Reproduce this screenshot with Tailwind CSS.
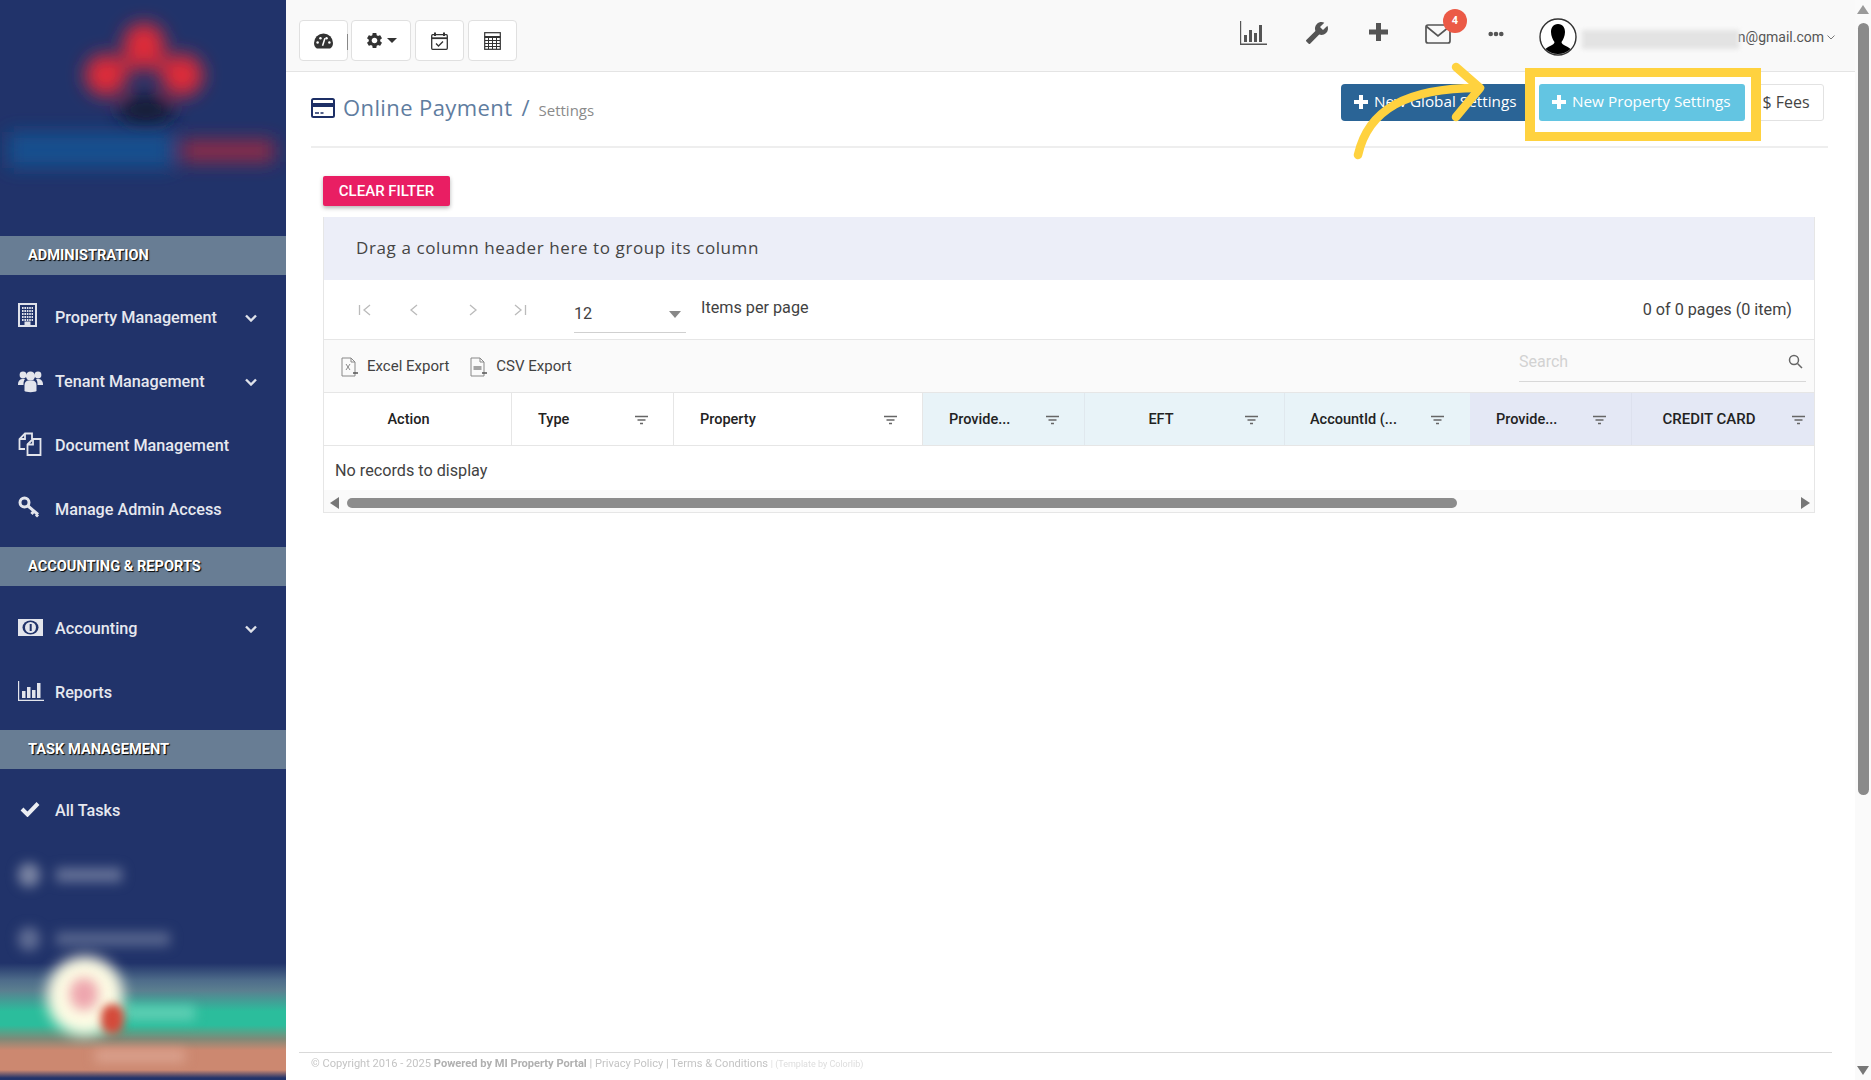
<!DOCTYPE html>
<html lang="en">
<head>
  <meta charset="UTF-8">
  <title>Online Payment - Settings</title>
  <script src="https://cdn.jsdelivr.net/npm/@tailwindcss/browser@4"></script>
</head>
<body class="bg-white text-[#333] font-['Roboto',sans-serif] overflow-hidden">
<div class="flex h-[1080px] w-[1871px] overflow-hidden">

  <!-- sidebar -->
  <aside class="relative w-[286px] shrink-0 h-full bg-[#21336a] text-[#e6e8ef] overflow-hidden">
    <svg class="block" width="286" height="236" viewBox="0 0 286 236">
      <defs><filter id="b1" x="-30%" y="-100%" width="160%" height="300%"><feGaussianBlur stdDeviation="9"/></filter></defs>
      <g filter="url(#b1)">
        <circle cx="144" cy="44" r="21" fill="#e02a38"/>
        <circle cx="106" cy="75" r="21" fill="#e02a38"/>
        <circle cx="182" cy="75" r="21" fill="#e02a38"/>
        <path d="M125 55 L165 55 L182 70 L108 70Z" fill="#c92c3c"/>
        <ellipse cx="146" cy="110" rx="28" ry="16" fill="#141d38"/>
      </g>
      <g filter="url(#b1)">
        <rect x="8" y="132" width="164" height="36" fill="#174f8e"/>
        <rect x="182" y="140" width="92" height="22" fill="#8f2b47"/>
      </g>
    </svg>

    <div class="h-[39px] bg-[#687d94] flex items-center pl-[28px] text-[14.600px] font-bold text-white [text-shadow:1px_1px_1px_#000]">ADMINISTRATION</div>
    <nav class="pt-[11px] pb-[5px] text-[16.200px] font-medium">
      <a class="h-[64px] flex items-center">
        <svg class="ml-[18px] w-[19px] h-[24px] -mt-[6px]" viewBox="0 0 19 24" fill="none" stroke="#dfe2ea"><rect x="1" y="1" width="17" height="22" stroke-width="2"/><path d="M4 5h11M4 8h11M4 11h11M4 14h11M4 17h11" stroke-width="2" stroke-dasharray="1.600 .8"/><rect x="7" y="19" width="5" height="4" fill="#dfe2ea"/></svg>
        <span class="ml-[18px] flex-1">Property Management</span>
        <svg class="w-[12px] h-[8px] mr-[29px]" viewBox="0 0 12 8" fill="none" stroke="#dfe2ea" stroke-width="2.400"><path d="M1 1.500l5 5 5-5"/></svg>
      </a>
      <a class="h-[64px] flex items-center">
        <svg class="ml-[18px] w-[25px] h-[24px] -mt-[2px]" viewBox="0 0 25 24" fill="#e3e5ec"><circle cx="5" cy="6" r="3.400"/><circle cx="20" cy="6" r="3.400"/><circle cx="12.500" cy="7" r="4.600"/><path d="M0 15c0-3 2-5 4.500-5H7c-1 1-1.500 3-1.500 5v1H0zM25 15c0-3-2-5-4.500-5H18c1 1 1.500 3 1.500 5v1H25z"/><path d="M6.500 22v-6c0-3 2-4.500 4-4.500h4c2 0 4 1.500 4 4.500v6c-1 1.500-11 1.500-12 0z"/></svg>
        <span class="ml-[12px] flex-1">Tenant Management</span>
        <svg class="w-[12px] h-[8px] mr-[29px]" viewBox="0 0 12 8" fill="none" stroke="#dfe2ea" stroke-width="2.400"><path d="M1 1.500l5 5 5-5"/></svg>
      </a>
      <a class="h-[64px] flex items-center">
        <svg class="ml-[18px] w-[24px] h-[24px] -mt-[4px]" viewBox="0 0 24 24" fill="none" stroke="#e3e5ec" stroke-width="1.800"><path d="M7 17H1.500V7L7 1.500h7V7"/><path d="M9.500 12.500L15 7h7.500v16H9.500z"/><path d="M7 1.500V7H1.500M15 7v5.500H9.500"/></svg>
        <span class="ml-[13px]">Document Management</span>
      </a>
      <a class="h-[64px] flex items-center">
        <svg class="ml-[18px] w-[22px] h-[22px] -mt-[6px]" viewBox="0 0 22 22" fill="none" stroke="#e3e5ec" stroke-width="3"><circle cx="6.500" cy="6.500" r="4.500"/><path d="M10 10l10 8.500M16 15l-2.500 3M20 18.500l-2 2"/></svg>
        <span class="ml-[15px]">Manage Admin Access</span>
      </a>
    </nav>

    <div class="h-[39px] bg-[#687d94] flex items-center pl-[28px] text-[14.600px] font-bold text-white [text-shadow:1px_1px_1px_#000]">ACCOUNTING &amp; REPORTS</div>
    <nav class="pt-[11px] pb-[5px] text-[16.200px] font-medium">
      <a class="h-[64px] flex items-center">
        <svg class="ml-[18px] w-[25px] h-[17px] -mt-[4px]" viewBox="0 0 25 17"><rect width="25" height="17" fill="#e3e5ec"/><ellipse cx="12.500" cy="8.500" rx="8" ry="7" fill="#21336a"/><ellipse cx="12.500" cy="8.500" rx="5.500" ry="5.500" fill="#e3e5ec"/><rect x="11.700" y="5" width="2" height="7" fill="#21336a"/></svg>
        <span class="ml-[12px] flex-1">Accounting</span>
        <svg class="w-[12px] h-[8px] mr-[29px]" viewBox="0 0 12 8" fill="none" stroke="#dfe2ea" stroke-width="2.400"><path d="M1 1.500l5 5 5-5"/></svg>
      </a>
      <a class="h-[64px] flex items-center">
        <svg class="ml-[18px] w-[26px] h-[20px] -mt-[5px]" viewBox="0 0 26 20" fill="#e3e5ec"><path d="M0 0h1.200v18.800H26V20H0z"/><rect x="4" y="10" width="3.500" height="7"/><rect x="9" y="6" width="3.500" height="11"/><rect x="14" y="9" width="3.500" height="8"/><rect x="19" y="2" width="3.500" height="15"/></svg>
        <span class="ml-[11px]">Reports</span>
      </a>
    </nav>

    <div class="h-[39px] bg-[#687d94] flex items-center pl-[28px] text-[14.600px] font-bold text-white [text-shadow:1px_1px_1px_#000]">TASK MANAGEMENT</div>
    <nav class="pt-[10px] text-[16.200px] font-medium">
      <a class="h-[64px] flex items-center">
        <svg class="ml-[20px] w-[20px] h-[16px] -mt-[4px]" viewBox="0 0 20 16" fill="none" stroke="#eceef3" stroke-width="4"><path d="M2 8l5.500 5.500L18 2.500"/></svg>
        <span class="ml-[15px]">All Tasks</span>
      </a>
      <!-- blurred items -->
      <a class="h-[64px] flex items-center blur-[6px]">
        <span class="ml-[18px] w-[22px] h-[24px] rounded-full bg-[#7b85a3]"></span>
        <span class="ml-[16px] w-[66px] h-[14px] bg-[#667298]"></span>
      </a>
      <a class="h-[64px] flex items-center blur-[6px]">
        <span class="ml-[18px] w-[22px] h-[24px] rounded-full bg-[#5f6c93]"></span>
        <span class="ml-[16px] w-[114px] h-[14px] bg-[#57658d]"></span>
      </a>
    </nav>

    <!-- blurred bottom of the sidebar -->
    <div class="absolute left-0 right-0 top-[963px] h-[115px] bg-[linear-gradient(to_bottom,transparent_0%,#4e6c8a_15%,#5b7f90_24%,#2bbd9c_42%,#2bbd9c_54%,#7f8a78_66%,#cc8870_76%,#cc8870_93%,#21336a_100%)]"></div>
    <div class="absolute left-[125px] top-[1006px] w-[70px] h-[14px] bg-[#62cfb5] blur-[6px]"></div>
    <div class="absolute left-[95px] top-[1050px] w-[90px] h-[12px] bg-[#dba390] blur-[6px]"></div>
    <div class="absolute left-[47px] top-[956px] w-[76px] h-[80px] rounded-full bg-[#fdfbe4] blur-[7px]"></div>
    <div class="absolute left-[70px] top-[978px] w-[28px] h-[32px] rounded-full bg-[#eea6ae] blur-[6px]"></div>
    <div class="absolute left-[101px] top-[1004px] w-[23px] h-[30px] rounded-full bg-[#d44a3a] blur-[4px]"></div>
    <div class="absolute left-0 right-0 bottom-0 h-[2px] bg-[#21336a]"></div>
  </aside>

  <!-- page -->
  <div class="relative flex-1 flex flex-col h-full min-w-0">
    <header class="h-[72px] shrink-0 bg-[#f9f9f9] border-b border-[#e4e4e4] flex items-start">
      <div class="flex items-start pl-[13px] pt-[20px]">
        <button class="w-[49px] h-[41px] bg-white border border-[#e0e0e0] rounded flex items-center justify-center">
          <svg class="w-[19px] h-[16px]" viewBox="0 0 20 16"><path d="M3 16C1 14.500 0 12.500 0 10a10 10 0 0 1 20 0c0 2.500-1 4.500-3 6z" fill="#333"/><g fill="#fff"><circle cx="3.800" cy="9.500" r="1.300"/><circle cx="6.800" cy="5" r="1.300"/><circle cx="13.200" cy="5" r="1.300"/><circle cx="16.200" cy="9.500" r="1.300"/></g><path d="M9 13l2.500-8" stroke="#fff" stroke-width="1.600"/></svg>
        </button>
        <span class="w-[1px] h-[16px] bg-[#888] -ml-[1px] mt-[14px] mr-[3px]"></span>
        <button class="w-[60px] h-[41px] bg-white border border-[#e0e0e0] rounded flex items-center justify-center gap-[3px]">
          <svg class="w-[19px] h-[19px]" viewBox="0 0 24 24" fill="#333"><path d="M19.140 12.940c.04-.3.06-.61.06-.94 0-.32-.02-.64-.07-.94l2.030-1.580c.18-.14.23-.41.12-.61l-1.920-3.320c-.12-.22-.37-.29-.59-.22l-2.390.96c-.5-.38-1.030-.7-1.620-.94l-.36-2.540c-.04-.24-.24-.41-.48-.41h-3.840c-.24 0-.43.17-.47.41l-.36 2.540c-.59.24-1.130.57-1.620.94l-2.390-.96c-.22-.08-.47 0-.59.22L2.740 8.870c-.12.21-.08.47.12.61l2.030 1.580c-.05.3-.09.63-.09.94s.02.64.07.94l-2.030 1.580c-.18.14-.23.41-.12.61l1.920 3.320c.12.22.37.29.59.22l2.390-.96c.5.38 1.030.7 1.620.94l.36 2.540c.05.24.24.41.48.41h3.840c.24 0 .44-.17.47-.41l.36-2.540c.59-.24 1.130-.56 1.620-.94l2.390.96c.22.08.47 0 .59-.22l1.920-3.320c.12-.22.07-.47-.12-.61l-2.010-1.580zM12 15.600c-1.980 0-3.600-1.620-3.600-3.600s1.620-3.600 3.600-3.600 3.600 1.620 3.600 3.600-1.620 3.600-3.600 3.600z"/></svg>
          <svg class="w-[10px] h-[5px]" viewBox="0 0 10 5" fill="#333"><path d="M0 0h10L5 5z"/></svg>
        </button>
        <button class="ml-[4px] w-[49px] h-[41px] bg-white border border-[#e0e0e0] rounded flex items-center justify-center">
          <svg class="w-[17px] h-[18px]" viewBox="0 0 17 18" fill="none" stroke="#333" stroke-width="1.300"><rect x=".7" y="2.700" width="15.600" height="14.600" rx="1"/><path d="M.7 6.200h15.600" stroke-width="1.800"/><path d="M4 .5v3.500M13 .5v3.500" stroke-width="2"/><path d="M5 11.500l2.500 2.500 4.500-4.500"/></svg>
        </button>
        <button class="ml-[4px] w-[49px] h-[41px] bg-white border border-[#e0e0e0] rounded flex items-center justify-center">
          <svg class="w-[17px] h-[18px]" viewBox="0 0 17 18" fill="none" stroke="#333"><rect x=".7" y=".7" width="15.600" height="16.600" stroke-width="1.200"/><path d="M.7 5h15.600" stroke-width="2"/><path d="M1 8.500h15M1 11.500h15M1 14.500h15M4.500 6v11M8.500 6v11M12.500 6v11" stroke-width="1"/></svg>
        </button>
      </div>

      <div class="ml-auto flex items-start pr-[20px]">
        <svg class="mt-[21px] w-[27px] h-[24px]" viewBox="0 0 27 24" fill="#555"><path d="M0 0h1.200v22.500H27V24H0z"/><rect x="4" y="14" width="3" height="7"/><rect x="9" y="9" width="3" height="12"/><rect x="14" y="12" width="3" height="9"/><rect x="19" y="4" width="3" height="17"/></svg>
        <svg class="ml-[38px] mt-[21px] w-[24px] h-[24px] -scale-x-100" viewBox="0 0 24 24" fill="#555"><path d="M22.700 19l-9.100-9.100c.9-2.300.4-5-1.500-6.900-2-2-5-2.400-7.400-1.300L9 6 6 9 1.600 4.700C.4 7.100.9 10.100 2.900 12.100c1.900 1.900 4.600 2.400 6.900 1.500l9.100 9.100c.4.4 1 .4 1.400 0l2.300-2.300c.5-.4.5-1.100.1-1.400z"/></svg>
        <svg class="ml-[40px] mt-[23px] w-[19px] h-[18px]" viewBox="0 0 19 18" fill="#555"><path d="M7 0h5v6.500h7v5h-7V18H7v-6.500H0v-5h7z"/></svg>
        <div class="relative ml-[37px] mt-[24px] w-[26px] h-[20px]">
          <svg class="w-[26px] h-[20px]" viewBox="0 0 26 20" fill="none" stroke="#555" stroke-width="1.700"><rect x="1" y="1" width="24" height="18" rx="2"/><path d="M1.500 2.500L13 12 24.500 2.500"/></svg>
          <span class="absolute left-[18px] -top-[15px] w-[24px] h-[24px] rounded-full bg-[#eb5a46] text-white text-[11px] font-bold flex items-center justify-center">4</span>
        </div>
        <svg class="ml-[37px] mt-[31px] w-[16px] h-[6px]" viewBox="0 0 16 6" fill="#555"><circle cx="2.700" cy="3" r="2.300"/><circle cx="8" cy="3" r="2.300"/><circle cx="13.300" cy="3" r="2.300"/></svg>
        <svg class="ml-[35px] mt-[18px] w-[38px] h-[38px]" viewBox="0 0 38 38"><circle cx="19" cy="19" r="18" fill="#fff" stroke="#333" stroke-width="1.400"/><path d="M19 6c5 0 7 4 7 8s-2 8-3.500 10c0 3 6 4 9 7a18 18 0 0 1-25 0c3-3 9-4 9-7-1.500-2-3.500-6-3.500-10s2-8 7-8z" fill="#000"/></svg>
        <span class="ml-[5px] mt-[30px] w-[157px] h-[19px] bg-[#e3e3e3] blur-[2px]"></span>
        <span class="-ml-[1px] mt-[27px] text-[14px] leading-[20px] text-[#555]">n@gmail.com</span>
        <svg class="ml-[3px] mt-[35px] w-[8px] h-[5px]" viewBox="0 0 8 5" fill="none" stroke="#777"><path d="M.5.5L4 4 7.500.5"/></svg>
      </div>
    </header>

    <main class="flex-1 flex flex-col min-h-0 pl-[25px] pr-[27px]">
      <!-- page heading -->
      <div class="h-[76px] shrink-0 border-b-2 border-[#eeeeee] flex items-start">
        <svg class="mt-[26px] w-[24px] h-[20px]" viewBox="0 0 24 20"><rect x="1" y="1" width="22" height="18" rx="1.500" fill="#fff" stroke="#1d2f66" stroke-width="2"/><rect x="1" y="5" width="22" height="4" fill="#1d2f66"/><path d="M4 15h4M9.500 15h3" stroke="#1d2f66" stroke-width="1.500"/></svg>
        <h1 class="ml-[8px] mt-[20px] text-[22px] leading-[30px] text-[#5f7d9f] font-['Open_Sans',sans-serif] tracking-[0.4px]">Online Payment</h1>
        <span class="ml-[9px] mt-[20px] text-[22px] leading-[30px] text-[#5f7d9f] font-['Open_Sans',sans-serif]">/</span>
        <span class="ml-[9px] mt-[28px] text-[15px] leading-[20px] text-[#8a8a8a] font-['Open_Sans',sans-serif]">Settings</span>
        <div class="ml-auto mr-[4px] mt-[12px] flex font-['Open_Sans',sans-serif] text-[15.300px] h-[37px]">
          <button class="w-[194px] bg-[#2a6496] text-white rounded-l flex items-center pl-[13px] pb-[2px] whitespace-nowrap">
            <svg class="w-[14px] h-[14px] mr-[6px]" viewBox="0 0 14 14" fill="#fff"><path d="M5 0h4v5h5v4H9v5H5V9H0V5h5z"/></svg>New Global Settings</button>
          <button class="ml-[4px] w-[206px] bg-[#63c5e2] text-white rounded-[3px] flex items-center pl-[13px] pb-[2px]">
            <svg class="w-[14px] h-[14px] mr-[6px]" viewBox="0 0 14 14" fill="#fff"><path d="M5 0h4v5h5v4H9v5H5V9H0V5h5z"/></svg>New Property Settings</button>
          <button class="ml-[6px] w-[73px] bg-white border border-[#e2e2e2] rounded-[3px] text-[#444] text-[16px] flex items-center justify-center pb-[2px] pr-[3px]">$ Fees</button>
        </div>
      </div>

      <button class="mt-[28px] ml-[12px] w-[127px] h-[30px] shrink-0 bg-[#e91e63] text-white text-[15px] font-medium rounded-[2px] shadow-[0_2px_4px_rgba(0,0,0,.3)]">CLEAR FILTER</button>

      <!-- grid -->
      <section class="mt-[11px] ml-[12px] w-[1492px] h-[296px] shrink-0 border border-[#e6e6e6] border-t-0 flex flex-col">
        <div class="h-[63px] bg-[#eceef8] flex items-center pl-[32px] pb-[2px] font-['Open_Sans',sans-serif] text-[17px] tracking-[0.6px] text-[#444]">Drag a column header here to group its column</div>

        <div class="h-[60px] border-b border-[#e6e6e6] flex text-[16.200px] text-[#424242]">
          <div class="flex items-center h-[60px] pl-[34px]">
            <svg class="w-[14px] h-[14px]" viewBox="0 0 14 14" fill="none" stroke="#bbb" stroke-width="1.300"><path d="M1.500 2v10M12 2L6 7l6 5"/></svg>
            <svg class="ml-[35px] w-[14px] h-[14px]" viewBox="0 0 14 14" fill="none" stroke="#bbb" stroke-width="1.300"><path d="M10 2L4 7l6 5"/></svg>
            <svg class="ml-[45px] w-[14px] h-[14px]" viewBox="0 0 14 14" fill="none" stroke="#bbb" stroke-width="1.300"><path d="M4 2l6 5-6 5"/></svg>
            <svg class="ml-[33px] w-[14px] h-[14px]" viewBox="0 0 14 14" fill="none" stroke="#bbb" stroke-width="1.300"><path d="M2 2l6 5-6 5M12.500 2v10"/></svg>
          </div>
          <div class="ml-[47px] mt-[2px] w-[112px] h-[51px] border-b border-[#d0d0d0] flex items-center justify-between pr-[5px] pt-[14px]">
            <span>12</span>
            <svg class="w-[12px] h-[7px]" viewBox="0 0 12 7" fill="#888"><path d="M0 0h12L6 7z"/></svg>
          </div>
          <span class="ml-[15px] mt-[16px] leading-[24px]">Items per page</span>
          <span class="ml-auto mr-[22px] mt-[18px] leading-[24px]">0 of 0 pages (0 item)</span>
        </div>

        <div class="h-[53px] bg-[#fafafa] border-b border-[#e6e6e6] flex items-start text-[15px] text-[#424242]">
          <svg class="ml-[17px] mt-[17px] w-[18px] h-[20px]" viewBox="0 0 18 20" fill="none" stroke="#888"><path d="M1 1h9l4 4v14H1z"/><path d="M10 1v4h4"/><path d="M5 7l4 6M9 7l-4 6" stroke-width="1"/><path d="M12 16h5" stroke="#555" stroke-width="1.500"/></svg>
          <span class="ml-[8px] mt-[14px] leading-[24px]">Excel Export</span>
          <svg class="ml-[21px] mt-[17px] w-[18px] h-[20px]" viewBox="0 0 18 20" fill="none" stroke="#888"><path d="M1 1h9l4 4v14H1z"/><path d="M10 1v4h4"/><path d="M3.500 10h8M3.500 12h8" stroke-width="1.500"/><path d="M12 16h5" stroke="#555" stroke-width="1.500"/></svg>
          <span class="ml-[8px] mt-[14px] leading-[24px]">CSV Export</span>
          <div class="ml-auto mr-[8px] w-[287px] h-[42px] border-b border-[#d8d8d8] flex items-center justify-between pr-[3px] pt-[2px]">
            <span class="text-[16px] text-[#d2d2d2]">Search</span>
            <svg class="w-[15px] h-[15px]" viewBox="0 0 15 15" fill="none" stroke="#666" stroke-width="1.500"><circle cx="6" cy="6" r="4.500"/><path d="M9.500 9.500L14 14"/></svg>
          </div>
        </div>

        <div class="h-[53px] border-b border-[#e6e6e6] grid grid-cols-[188px_162px_249px_162px_200px_185px_162px_182px] text-[14.500px] font-medium text-[#222]">
          <div class="border-r border-[#e6e6e6] flex items-center justify-center pr-[18px] pt-[2px]">Action</div>
          <div class="border-r border-[#e6e6e6] flex items-center justify-between pl-[26px] pr-[25px] pt-[2px]">Type<svg class="w-[13px] h-[10px]" viewBox="0 0 13 10" fill="none" stroke="#666" stroke-width="1.400"><path d="M0 1.500h13M2.500 5h8M5 8.500h3"/></svg></div>
          <div class="border-r border-[#e6e6e6] flex items-center justify-between pl-[26px] pr-[25px] pt-[2px]">Property<svg class="w-[13px] h-[10px]" viewBox="0 0 13 10" fill="none" stroke="#666" stroke-width="1.400"><path d="M0 1.500h13M2.500 5h8M5 8.500h3"/></svg></div>
          <div class="bg-[#e8f3f8] border-r border-[#e0e8ee] flex items-center justify-between pl-[26px] pr-[25px] pt-[2px]">Provide...<svg class="w-[13px] h-[10px]" viewBox="0 0 13 10" fill="none" stroke="#666" stroke-width="1.400"><path d="M0 1.500h13M2.500 5h8M5 8.500h3"/></svg></div>
          <div class="bg-[#e8f3f8] border-r border-[#e0e8ee] flex items-center pr-[26px] pt-[2px]"><span class="flex-1 text-center pr-[8px]">EFT</span><svg class="w-[13px] h-[10px]" viewBox="0 0 13 10" fill="none" stroke="#666" stroke-width="1.400"><path d="M0 1.500h13M2.500 5h8M5 8.500h3"/></svg></div>
          <div class="bg-[#e8f3f8] flex items-center justify-between pl-[25px] pr-[26px] pt-[2px]">AccountId (...<svg class="w-[13px] h-[10px]" viewBox="0 0 13 10" fill="none" stroke="#666" stroke-width="1.400"><path d="M0 1.500h13M2.500 5h8M5 8.500h3"/></svg></div>
          <div class="bg-[#e4e8f5] border-r border-[#dde1ee] flex items-center justify-between pl-[26px] pr-[25px] pt-[2px]">Provide...<svg class="w-[13px] h-[10px]" viewBox="0 0 13 10" fill="none" stroke="#666" stroke-width="1.400"><path d="M0 1.500h13M2.500 5h8M5 8.500h3"/></svg></div>
          <div class="bg-[#e4e8f5] flex items-center pr-[9px] pt-[1px]"><span class="flex-1 text-center text-[15px] pr-[6px]">CREDIT CARD</span><svg class="w-[13px] h-[10px]" viewBox="0 0 13 10" fill="none" stroke="#666" stroke-width="1.400"><path d="M0 1.500h13M2.500 5h8M5 8.500h3"/></svg></div>
        </div>

        <div class="flex-1 flex items-center pl-[11px] pt-[6px] text-[16.200px] text-[#424242]">No records to display</div>

        <div class="h-[22px] shrink-0 bg-[#fafafa] flex items-center pt-[4px]">
          <svg class="ml-[5px] w-[10px] h-[12px]" viewBox="0 0 10 12" fill="#777"><path d="M10 0v12L1 6z"/></svg>
          <span class="ml-[8px] w-[1110px] h-[10px] rounded-full bg-[#8c8c8c]"></span>
          <svg class="ml-auto mr-[3px] w-[10px] h-[12px]" viewBox="0 0 10 12" fill="#777"><path d="M0 0v12l9-6z"/></svg>
        </div>
      </section>

      <!-- footer -->
      <footer class="mt-auto mb-[9px] -ml-[12px] -mr-[4px] h-[19px] border-t border-[#d9d9d9] pt-[2px] pl-[12px] text-[11.100px] leading-[17px] text-[#c4c4c4] whitespace-nowrap blur-[0.5px]">
        © Copyright 2016 - 2025 <b class="text-[#b0b0b0]">Powered by MI Property Portal</b> | Privacy Policy | Terms &amp; Conditions <span class="text-[9px] text-[#dddddd]">| (Template by Colorlib)</span>
      </footer>
    </main>

    <!-- yellow annotation over the buttons -->
    <div class="absolute left-[1239px] top-[68px] w-[236px] h-[73px] border-y-[9px] border-x-[10px] border-[#ffd23f] pointer-events-none"></div>
    <svg class="absolute left-[1060px] top-[60px] w-[140px] h-[100px] pointer-events-none" viewBox="0 0 140 100" fill="none" stroke="#ffd23f" stroke-width="8.500" stroke-linecap="round" stroke-linejoin="round"><path d="M12 95C22 50 60 28 132 28"/><path d="M110 7l24 21-24 29"/></svg>
  </div>

  <!-- page scrollbar -->
  <div class="w-[16px] h-full shrink-0 bg-[#fafafa] flex flex-col items-center">
    <svg class="mt-[5px] w-[12px] h-[9px]" viewBox="0 0 12 9" fill="#9a9a9a"><path d="M6 0l6 9H0z"/></svg>
    <span class="mt-[9px] w-[11px] h-[772px] rounded-full bg-[#8a8a8a]"></span>
    <svg class="mt-auto mb-[5px] w-[12px] h-[9px]" viewBox="0 0 12 9" fill="#777"><path d="M6 9L0 0h12z"/></svg>
  </div>
</div>
</body>
</html>
